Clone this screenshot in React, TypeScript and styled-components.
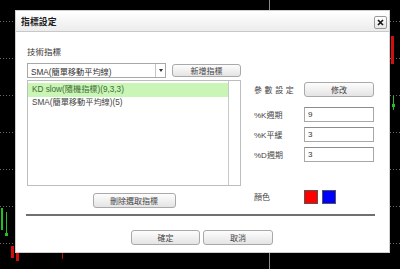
import React from "react";
import styled, { createGlobalStyle } from "styled-components";

const Global = createGlobalStyle`
  html, body { margin: 0; padding: 0; background: #000; }
  body { font-family: "Liberation Sans", "Noto Sans CJK TC", Arial, sans-serif; }
  * { box-sizing: border-box; }
`;

const FONT = `"Liberation Sans", "Noto Sans CJK TC", Arial, sans-serif`;

const Screen = styled.div`
  position: relative;
  width: 400px;
  height: 269px;
  overflow: hidden;
  background: #000;
`;

const ChartLayer = styled.svg`
  position: absolute;
  left: 0;
  top: 0;
`;

const Dialog = styled.div`
  position: absolute;
  left: 15px;
  top: 10px;
  width: 375px;
  height: 243px;
  background: #fff;
  border: 1px solid #cfcfcf;
  display: flex;
  flex-direction: column;
  font-family: ${FONT};
  color: #444;
`;

const TitleBar = styled.div`
  height: 21px;
  flex: none;
  display: flex;
  align-items: center;
  justify-content: space-between;
  padding: 0 2px 0 5px;
  background: linear-gradient(#ffffff, #ececec);
  border-bottom: 1px solid #c8c8c8;
`;

const Title = styled.div`
  font-size: 8.8px;
  font-weight: bold;
  color: #1a1a1a;
  letter-spacing: 0.1px;
`;

const CloseButton = styled.div`
  width: 13px;
  height: 13px;
  border: 1px solid #9a9a9a;
  border-radius: 2px;
  background: linear-gradient(#ffffff, #e6e6e6);
  display: flex;
  align-items: center;
  justify-content: center;
  margin-top: 2px;
`;

const Body = styled.div`
  display: flex;
  flex-direction: column;
  padding: 15px 0 0 11px;
`;

const Columns = styled.div`
  display: flex;
  gap: 13px;
`;

const LeftCol = styled.div`
  width: 214px;
  display: flex;
  flex-direction: column;
`;

const SectionLabel = styled.div`
  font-size: 8.5px;
  line-height: 10px;
  height: 10px;
  color: #333;
`;

const SelectRow = styled.div`
  display: flex;
  align-items: center;
  gap: 6px;
  margin-top: 6px;
  height: 15px;
`;

const Select = styled.div`
  width: 140px;
  height: 15px;
  border: 1px solid #a8a8a8;
  background: #fff;
  display: flex;
  align-items: center;
`;

const SelectText = styled.div`
  flex: 1;
  font-size: 8.2px;
  padding-left: 3px;
  color: #333;
  white-space: nowrap;
`;

const SelectArrow = styled.div`
  width: 10px;
  height: 100%;
  border-left: 1px solid #c4c4c4;
  display: flex;
  align-items: center;
  justify-content: center;
  &::after {
    content: "";
    border-left: 2px solid transparent;
    border-right: 2px solid transparent;
    border-top: 3px solid #333;
  }
`;

const Button = styled.div<{ $w: number; $h?: number }>`
  width: ${(p) => p.$w}px;
  height: ${(p) => p.$h ?? 15}px;
  border: 1px solid #a9a9a9;
  border-radius: 3px;
  background: linear-gradient(#fdfdfd, #e4e4e4);
  display: flex;
  align-items: center;
  justify-content: center;
  font-size: 8px;
  color: #444;
  flex: none;
`;

const ListBox = styled.div`
  margin-top: 2px;
  height: 106px;
  border: 1px solid #bdbdbd;
  display: flex;
  background: #fff;
`;

const ListItems = styled.div`
  flex: 1;
  padding: 2px 0 0 0;
  display: flex;
  flex-direction: column;
`;

const ListItem = styled.div<{ $selected?: boolean }>`
  height: 14px;
  line-height: 14px;
  padding-left: 4px;
  font-size: 8.2px;
  white-space: nowrap;
  background: ${(p) => (p.$selected ? "#c9f6b6" : "transparent")};
  color: ${(p) => (p.$selected ? "#3d6b33" : "#444")};
  margin-bottom: ${(p) => (p.$selected ? "-1px" : "0")};
`;

const ScrollTrack = styled.div`
  width: 12px;
  border-left: 1px solid #c8c8c8;
  background: #fff;
`;

const DeleteRow = styled.div`
  display: flex;
  justify-content: center;
  margin-top: 7px;
`;

const RightCol = styled.div`
  width: 120px;
  display: flex;
  flex-direction: column;
  padding-top: 35px;
`;

const ParamRow = styled.div<{ $gap?: number }>`
  display: flex;
  align-items: center;
  height: 15px;
  margin-bottom: ${(p) => p.$gap ?? 5}px;
`;

const ParamLabel = styled.div<{ $spaced?: boolean }>`
  width: 50px;
  font-size: 8px;
  color: #444;
  white-space: nowrap;
  letter-spacing: ${(p) => (p.$spaced ? "2.6px" : "0")};
`;

const Input = styled.div`
  width: 70px;
  height: 15px;
  border: 1px solid #a8a8a8;
  border-top-color: #8c8c8c;
  background: #fff;
  font-size: 8px;
  color: #333;
  padding-left: 3px;
  display: flex;
  align-items: center;
`;

const Swatches = styled.div`
  display: flex;
  gap: 4px;
`;

const Swatch = styled.div<{ $c: string }>`
  width: 14px;
  height: 14px;
  background: ${(p) => p.$c};
  border: 1px solid #555;
`;

const Divider = styled.div`
  margin: 5px 0 0 -1px;
  width: 349px;
  height: 2px;
  background: #707070;
`;

const Footer = styled.div`
  display: flex;
  justify-content: center;
  gap: 3px;
  margin-top: 14px;
  padding-right: 12px;
`;

const dotted = [21, 58, 95, 132, 169, 206, 243];

function Chart() {
  return (
    <ChartLayer width={400} height={269} viewBox="0 0 400 269">
      {dotted.map((y) => (
        <line key={y} x1={0} x2={400} y1={y + 0.5} y2={y + 0.5} stroke="#6a6a6a" strokeDasharray="1 2" />
      ))}
      <line x1={269.5} x2={269.5} y1={0} y2={269} stroke="#8a8a8a" />
      <rect x={1} y={208} width={2} height={22} fill="#22c022" />
      <line x1={6.5} x2={6.5} y1={212} y2={236} stroke="#22c022" />
      <rect x={5} y={233} width={3} height={3} fill="#22c022" />
      <rect x={11} y={246} width={3} height={12} fill="#d01010" />
      <rect x={16} y={252} width={3} height={9} fill="#d01010" />
      <line x1={62.5} x2={62.5} y1={252} y2={259} stroke="#b01010" />
      <rect x={391} y={36} width={3} height={28} fill="#d01010" />
      <line x1={393.5} x2={393.5} y1={96} y2={110} stroke="#22c022" />
      <rect x={392} y={104} width={3} height={3} fill="#22c022" />
    </ChartLayer>
  );
}

export default function App() {
  return (
    <>
      <Global />
      <Screen>
        <Chart />
        <Dialog>
          <TitleBar>
            <Title>指標設定</Title>
            <CloseButton>
              <svg width="7" height="7" viewBox="0 0 7 7">
                <path d="M1 1 L6 6 M6 1 L1 6" stroke="#111" strokeWidth="1.6" />
              </svg>
            </CloseButton>
          </TitleBar>
          <Body>
            <Columns>
              <LeftCol>
                <SectionLabel>技術指標</SectionLabel>
                <SelectRow>
                  <Select>
                    <SelectText>SMA(簡單移動平均線)</SelectText>
                    <SelectArrow />
                  </Select>
                  <Button $w={69} $h={13}>新增指標</Button>
                </SelectRow>
                <ListBox>
                  <ListItems>
                    <ListItem $selected>KD slow(隨機指標)(9,3,3)</ListItem>
                    <ListItem>SMA(簡單移動平均線)(5)</ListItem>
                  </ListItems>
                  <ScrollTrack />
                </ListBox>
                <DeleteRow>
                  <Button $w={83}>刪除選取指標</Button>
                </DeleteRow>
              </LeftCol>
              <RightCol>
                <ParamRow $gap={10}>
                  <ParamLabel $spaced>參數設定</ParamLabel>
                  <Button $w={70}>修改</Button>
                </ParamRow>
                <ParamRow>
                  <ParamLabel>%K週期</ParamLabel>
                  <Input>9</Input>
                </ParamRow>
                <ParamRow>
                  <ParamLabel>%K平緩</ParamLabel>
                  <Input>3</Input>
                </ParamRow>
                <ParamRow $gap={27}>
                  <ParamLabel>%D週期</ParamLabel>
                  <Input>3</Input>
                </ParamRow>
                <ParamRow>
                  <ParamLabel>顏色</ParamLabel>
                  <Swatches>
                    <Swatch $c="#ff0000" />
                    <Swatch $c="#0000ff" />
                  </Swatches>
                </ParamRow>
              </RightCol>
            </Columns>
            <Divider />
            <Footer>
              <Button $w={69}>確定</Button>
              <Button $w={70}>取消</Button>
            </Footer>
          </Body>
        </Dialog>
      </Screen>
    </>
  );
}
